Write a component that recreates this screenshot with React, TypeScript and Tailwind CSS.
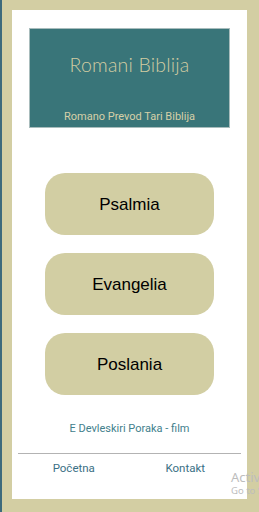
export default function App() {
  const books = ['Psalmia', 'Evangelia', 'Poslania'];

  return (
    <main className="relative h-[512px] w-[259px] overflow-hidden border-l-[2px] border-[#3d6a7c] bg-[#d3cea3] pl-[10px] pr-[12px] pt-[10px] pb-[13px]">
      <div className="flex h-full flex-col bg-white">
        {/* Header */}
        <div className="mx-[17px] mt-[18px] flex h-[100px] flex-col items-center border border-[#a8bcbc] bg-[#397579]">
          <h1 className="mt-[24px] font-['Lato',sans-serif] text-[19.5px] font-light leading-[24px] tracking-[0.2px] text-[#d2cca2]">
            Romani Biblija
          </h1>
          <p className="mt-auto mb-[3px] font-['Roboto',sans-serif] text-[11px] leading-[14px] text-[#d6d0a8]">
            Romano Prevod Tari Biblija
          </p>
        </div>

        {/* Books */}
        <div className="mt-[45px] flex flex-col gap-[18px] px-[33px]">
          {books.map((b) => (
            <button
              key={b}
              className="flex h-[62px] items-center justify-center rounded-[20px] bg-[#d2cea3] pt-[2px] font-['Liberation_Sans',sans-serif] text-[17px] text-black"
            >
              {b}
            </button>
          ))}
        </div>

        <p className="mt-[27px] text-center font-['Roboto',sans-serif] text-[11px] leading-[14px] text-[#42808c]">
          E Devleskiri Poraka - film
        </p>

        {/* Footer nav */}
        <nav className="mx-[6px] mt-[17px] grid grid-cols-2 border-t border-[#b3b3b3] pt-[7px] font-['Roboto',sans-serif] text-[11.5px] leading-[14px] text-[#3a7085]">
          <span className="text-center">Početna</span>
          <span className="text-center">Kontakt</span>
        </nav>
      </div>

      {/* Windows activation watermark */}
      <div className="pointer-events-none absolute left-[229px] top-[469px] whitespace-nowrap font-['Noto_Sans',sans-serif] text-[#bdbdbd]">
        <div className="text-[13px] leading-[16px]">Activate Windows</div>
        <div className="text-[9.5px] leading-[12px]">Go to Settings</div>
      </div>
    </main>
  );
}
